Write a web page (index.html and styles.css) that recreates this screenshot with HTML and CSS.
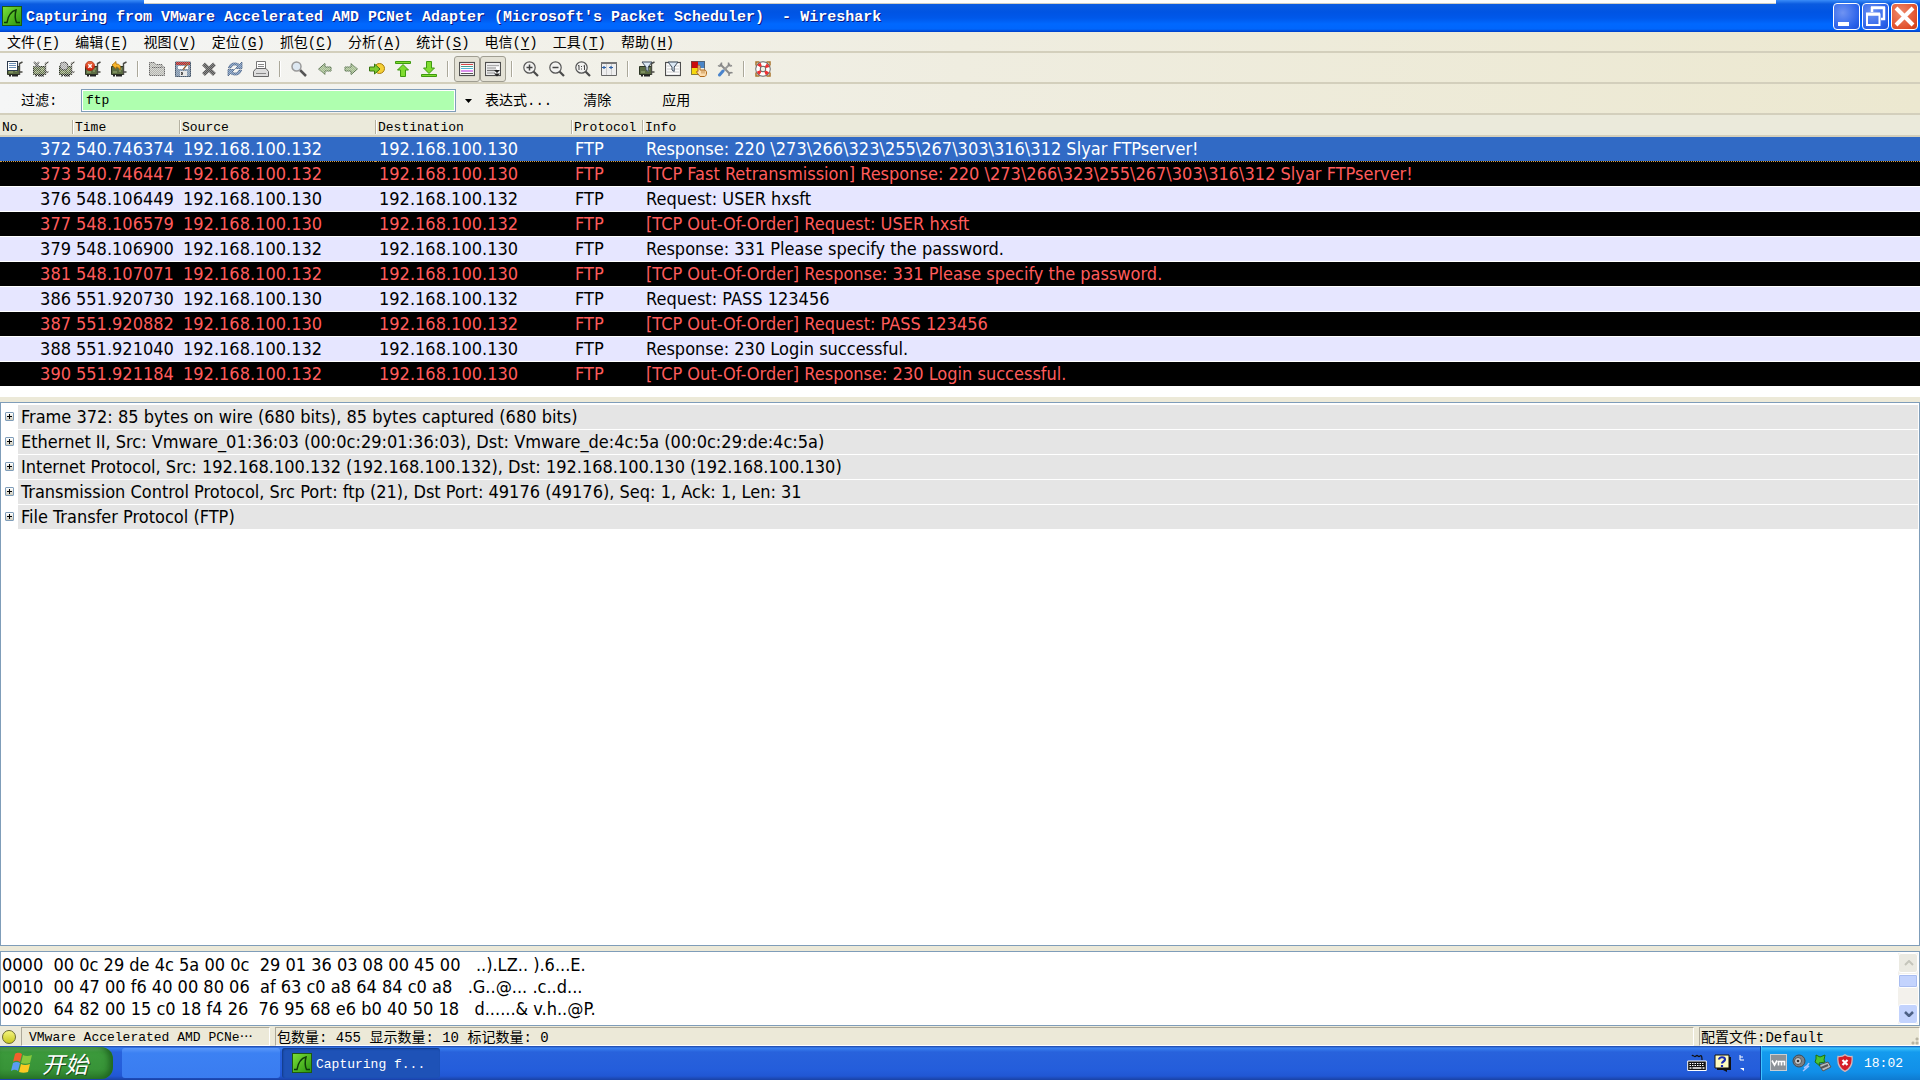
FILE: index.html
```html
<html lang="zh-CN">
<head>
  <meta charset="UTF-8" />
  <meta name="viewport" content="width=device-width, initial-scale=1.0"/>
  <title>Wireshark</title>
  <link rel="stylesheet" href="styles.css">
</head>
<body>

  <svg class="sprite" aria-hidden="true">
    <linearGradient id="gGreen" x1="0" y1="0" x2="1" y2="1"><stop offset="0" stop-color="#7be03a"/><stop offset="1" stop-color="#2a9410"/></linearGradient>
    <linearGradient id="gRed" x1="0" y1="0" x2="0" y2="1"><stop offset="0" stop-color="#f07040"/><stop offset="1" stop-color="#c81808"/></linearGradient>
    <symbol id="fin" viewBox="0 0 20 20">
      <rect x="0.5" y="0.5" width="19" height="19" fill="url(#gGreen)" stroke="#1d5a10"/>
      <path d="M2 16.500h3c1-6 3-11 9-12.500-1 4-1 9 .5 12.500H18" fill="none" stroke="#0d3a08" stroke-width="1.500"/>
    </symbol>
    <symbol id="nic" viewBox="0 0 16 16">
      <path d="M.5 5.500h12v8H.5z" fill="#5c6d43" stroke="#2c3524"/>
      <path d="M12.500 14V2.500L15.500 1M13 11h2.500" fill="none" stroke="#4a4a44" stroke-width="1.400"/>
      <path d="M2 14.500h2m1 0h6" stroke="#222" stroke-width="2"/>
      <path d="M2 11h4M8 8h3M8 10h2" stroke="#9fb37a"/>
    </symbol>
    <symbol id="zoomglass" viewBox="0 0 16 16">
      <path d="M10.500 10.500l4.500 4.500" stroke="#4a4a4a" stroke-width="2.200"/>
      <circle cx="6.500" cy="6.500" r="5.700" fill="#f2f2f0" stroke="#565656" stroke-width="1.200"/>
    </symbol>
    <symbol id="funnel" viewBox="0 0 16 16">
      <path d="M3 1h10L9.200 6v4.500L7 9V6z" fill="#dbe8f4" stroke="#3d4a5a"/>
    </symbol>
    <symbol id="arrow" viewBox="0 0 16 16">
      <path d="M1.500 8L8 2.500v3.500h6v4H8v3.500z" fill="#a3bd8e" stroke="#55704a"/>
    </symbol>
    <symbol id="lines" viewBox="0 0 16 16">
      <rect x="0.500" y="1.500" width="15" height="13" fill="#fff" stroke="#4e4e4e" stroke-width="1.200"/>
    </symbol>
    <pattern id="dither" width="2" height="2" patternUnits="userSpaceOnUse"><path d="M0 0h1v1H0zM1 1h1v1H1z" fill="#f3f2ee"/></pattern>
  </svg>

  <header class="titlebar">
    <svg class="icon-20"><use href="#fin"/></svg>
    <h1>Capturing from VMware Accelerated AMD PCNet Adapter (Microsoft's Packet Scheduler)&nbsp; - Wireshark</h1>
    <div class="window-buttons">
      <button aria-label="最小化"><svg viewBox="0 0 25 25"><path d="M4 18h11v4H4z" fill="#fff"/></svg></button>
      <button aria-label="还原"><svg viewBox="0 0 25 25"><path d="M9 8V4h12v11h-3M8 3.500h14" fill="none" stroke="#fff" stroke-width="2.500"/><path d="M4 10.500h12.500V21H4z" fill="none" stroke="#fff" stroke-width="2"/><path d="M3 10h14" stroke="#fff" stroke-width="3"/></svg></button>
      <button class="close" aria-label="关闭"><svg viewBox="0 0 25 25"><path d="M4 4l17 17M21 4L4 21" stroke="#fff" stroke-width="4"/></svg></button>
    </div>
  </header>

  <nav class="bar menu">
    <button>文件(<u>F</u>)</button>
    <button>编辑(<u>E</u>)</button>
    <button>视图(<u>V</u>)</button>
    <button>定位(<u>G</u>)</button>
    <button>抓包(<u>C</u>)</button>
    <button>分析(<u>A</u>)</button>
    <button>统计(<u>S</u>)</button>
    <button>电信(<u>Y</u>)</button>
    <button>工具(<u>T</u>)</button>
    <button>帮助(<u>H</u>)</button>
  </nav>

  <div class="bar toolbar">
    <button aria-label="网络接口"><svg viewBox="0 0 16 16"><use href="#nic"/><rect x="0.500" y="0.500" width="10" height="9" fill="#fff" stroke="#2d3b4d"/><path d="M2 2.500h7M2 4.500h7M2 6.500h7" stroke="#6b8fb5"/></svg></button>
    <button aria-label="抓包选项"><svg viewBox="0 0 16 16"><use href="#nic"/><path d="M1 1l5 5M6 1L2 6" stroke="#666" stroke-width="2"/><rect width="16" height="16" fill="url(#dither)" opacity=".6"/></svg></button>
    <button aria-label="开始抓包"><svg viewBox="0 0 16 16"><use href="#nic"/><circle cx="5" cy="5" r="4" fill="#aaa" stroke="#444"/><rect width="16" height="16" fill="url(#dither)" opacity=".6"/></svg></button>
    <button aria-label="停止抓包"><svg viewBox="0 0 16 16"><use href="#nic"/><circle cx="5" cy="5" r="4.700" fill="url(#gRed)" stroke="#a02008" stroke-width=".6"/><path d="M3.300 3.300l3.400 3.400M6.700 3.300L3.300 6.700" stroke="#fff" stroke-width="1.500"/></svg></button>
    <button aria-label="重新抓包"><svg viewBox="0 0 16 16"><use href="#nic"/><path d="M1 4l4-3.500V3c4 0 5 2 4 6-1-2-2-3-4-3v2z" fill="#f7b52c" stroke="#a86c08" stroke-width=".8"/></svg></button>
    <i></i>
    <button aria-label="打开"><svg viewBox="0 0 16 16"><path d="M.5 14.500V1.500h5l1.500 2h6V6h2.500v8.500z" fill="#b4b5b0" stroke="#666"/><path d="M3 6.500h10" stroke="#666"/><rect width="16" height="16" fill="url(#dither)" opacity=".6"/></svg></button>
    <button aria-label="保存"><svg viewBox="0 0 16 16"><path d="M.5 1h15v14.500H.5z" fill="#7f95ad" stroke="#45566b"/><path d="M1 1h14v3H1z" fill="#b03030"/><path d="M3 5h10v3H3z" fill="#fff"/><path d="M5 10h7v5H5z" fill="#e6e6e6"/><path d="M6 11h2v3H6z" fill="#444"/><path d="M13 2L8 9" stroke="#8b5a2b" stroke-width="1.500"/><rect width="16" height="16" fill="url(#dither)" opacity=".3"/></svg></button>
    <button aria-label="关闭文件"><svg viewBox="0 0 16 16"><path d="M2.500 3l11 10.500M13.500 3L2.500 13.500" stroke="#555" stroke-width="4"/><rect width="16" height="16" fill="url(#dither)" opacity=".35"/></svg></button>
    <button aria-label="重新加载"><svg viewBox="0 0 16 16"><path d="M1.500 7c1-6 8-6 11-3.500L15 1v6.500H8.500L11 5C8 3 5 4 4 7zM14.500 9c-1 6-8 6-11 3.500L1 15V8.500h6.500L5 11c3 2 6 1 7-2z" fill="#6d8cb5" stroke="#34507a" stroke-width=".7"/><rect width="16" height="16" fill="url(#dither)" opacity=".4"/></svg></button>
    <button aria-label="打印"><svg viewBox="0 0 16 16"><path d="M3.500 8V.5h9V8" fill="#fff" stroke="#777"/><path d="M.5 15.500v-5L3 7.500h10l2.500 3v5z" fill="#ddd" stroke="#666"/><path d="M5 3.500h6M5 5.500h6M3 12.500h10" stroke="#888"/></svg></button>
    <i></i>
    <button aria-label="查找"><svg viewBox="0 0 16 16"><path d="M9 9l6 6" stroke="#555" stroke-width="2.500"/><circle cx="5.500" cy="5.500" r="4.500" fill="#dde8f2" stroke="#999" stroke-width="1.500"/></svg></button>
    <button aria-label="后退"><svg viewBox="0 0 16 16"><use href="#arrow"/><rect width="16" height="16" fill="url(#dither)" opacity=".4"/></svg></button>
    <button aria-label="前进"><svg viewBox="0 0 16 16"><g transform="matrix(-1 0 0 1 16 0)"><use href="#arrow"/></g><rect width="16" height="16" fill="url(#dither)" opacity=".4"/></svg></button>
    <button aria-label="转到"><svg viewBox="0 0 16 16"><circle cx="10.500" cy="7.500" r="5" fill="#f4cf35" stroke="#a87d10"/><path d="M.5 6h5V3L11 8l-5.500 5v-3h-5z" fill="#7dcc30" stroke="#38760f"/></svg></button>
    <button aria-label="第一个"><svg viewBox="0 0 16 16"><path d="M.5.500h15v2H.5zM8 3.500l5.500 5.500H10.500v6.500h-5V9h-3z" fill="#7fdc30" stroke="#3f9a10"/></svg></button>
    <button aria-label="最后一个"><svg viewBox="0 0 16 16"><path d="M.5 13.500h15v2H.5zM8 12.500L2.500 7h3V.5h5V7h3z" fill="#7fdc30" stroke="#3f9a10"/></svg></button>
    <i></i>
    <button class="on" aria-label="着色"><svg viewBox="0 0 16 16"><use href="#lines"/><path d="M2 3.500h12" stroke="#d84848"/><path d="M2 5.500h12" stroke="#489a8a"/><path d="M2 7.500h12" stroke="#50b8d8"/><path d="M2 10h12" stroke="#dc90ec" stroke-width="2"/><path d="M2 12.500h12" stroke="#555"/></svg></button>
    <button class="on" aria-label="自动滚动"><svg viewBox="0 0 16 16"><use href="#lines"/><path d="M2 4.500h12M2 7h9M2 12h8" stroke="#aaa" stroke-width="1.500"/><path d="M2 9.500h10" stroke="#777" stroke-width="1.500"/><path d="M9 9h6l-3 3zM9 12.500h6l-3 3z" fill="#222"/></svg></button>
    <i></i>
    <button aria-label="放大"><svg viewBox="0 0 16 16"><use href="#zoomglass"/><path d="M3.500 6.500h6M6.500 3.500v6" stroke="#444" stroke-width="1.500"/></svg></button>
    <button aria-label="缩小"><svg viewBox="0 0 16 16"><use href="#zoomglass"/><path d="M3.500 6.500h6" stroke="#444" stroke-width="1.500"/></svg></button>
    <button aria-label="正常大小"><svg viewBox="0 0 16 16"><use href="#zoomglass"/><path d="M3 5l1-.7v4.700M8.500 5l1-.7v4.700M6.500 5v1M6.500 7.500v1" fill="none" stroke="#444"/></svg></button>
    <button aria-label="调整列宽"><svg viewBox="0 0 16 16"><path d="M.5 1.500h15v13H.5z" fill="#eee" stroke="#666"/><path d="M0 2h16" stroke="#777" stroke-width="2"/><path d="M5.500 3v11M10.500 3v11" stroke="#ccc"/><path d="M1 6.500h4M3 5v3M8 6.500h4M10 5v3" stroke="#2e62a8" stroke-width="1.200"/></svg></button>
    <i></i>
    <button aria-label="抓包过滤"><svg viewBox="0 0 16 16"><use href="#nic"/><use href="#funnel"/></svg></button>
    <button aria-label="显示过滤"><svg viewBox="0 0 16 16"><use href="#lines"/><path d="M2 5h12M2 8h12M2 11h12" stroke="#ccc"/><use href="#funnel"/></svg></button>
    <button aria-label="着色规则"><svg viewBox="0 0 16 16"><path d="M0 0h7v7H0z" fill="#c90c0c"/><path d="M7 0h7v7H7z" fill="#4a86c8"/><path d="M0 7h7v7H0z" fill="#f6d80c"/><path d="M.5.500h13v13H.5z" fill="none" stroke="#555" stroke-width=".7"/><path d="M7 4.500c1-.8 2 0 2 1V9h4c2 0 2.500 1 2.500 3 0 2-1 3.500-2 3.500H9L5.500 11c0-1 1-1 1.500-.5z" fill="#fbdcae" stroke="#b06a1c"/><path d="M11 9.500v3M13 9.500v3" stroke="#b06a1c" stroke-width=".7"/></svg></button>
    <button aria-label="首选项"><svg viewBox="0 0 16 16"><path d="M3 3l10 10" stroke="#8a8a8a" stroke-width="2"/><path d="M13 3L7 9" stroke="#999" stroke-width="2"/><path d="M1 4.500c2 1.500 4 0 3.500-3M15 4.500c-2 1-4 0-3.500-3M15.500 12c-2-1-4 0-3.500 3" fill="none" stroke="#888" stroke-width="1.500"/><path d="M6 10l-3.500 4" stroke="#4a84cc" stroke-width="3" stroke-linecap="round"/></svg></button>
    <i></i>
    <button aria-label="帮助"><svg viewBox="0 0 16 16"><path d="M1 4.500V1h3.500M11.500 1H15v3.500M1 11.500V15h3.500M11.500 15H15v-3.500" fill="none" stroke="#a8742c" stroke-width="1.500"/><circle cx="8" cy="8" r="5" fill="none" stroke="#666" stroke-width="5.500"/><circle cx="8" cy="8" r="5" fill="none" stroke="#fff" stroke-width="3.600"/><circle cx="8" cy="8" r="5" fill="none" stroke="#ee3030" stroke-width="3.600" stroke-dasharray="3 4.854" stroke-dashoffset="-2.430"/></svg></button>
  </div>

  <div class="bar filter">
    <label for="filter">过滤:</label>
    <input id="filter" type="text" value="ftp">
    <button class="drop" aria-label="历史"><svg viewBox="0 0 7 4"><path d="M0 0h7L3.500 4z"/></svg></button>
    <button>表达式...</button>
    <button>清除</button>
    <button>应用</button>
  </div>

  <main>
    <section class="packets">
      <table>
        <colgroup><col class="c-no"><col class="c-time"><col class="c-addr"><col class="c-addr"><col class="c-proto"><col></colgroup>
        <thead>
          <tr><th>No.</th><th>Time</th><th>Source</th><th>Destination</th><th>Protocol</th><th>Info</th></tr>
        </thead>
        <tbody>
          <tr class="selected"><td>372</td><td>540.746374</td><td>192.168.100.132</td><td>192.168.100.130</td><td>FTP</td><td>Response: 220 \273\266\323\255\267\303\316\312 Slyar FTPserver!</td></tr>
          <tr class="bad"><td>373</td><td>540.746447</td><td>192.168.100.132</td><td>192.168.100.130</td><td>FTP</td><td>[TCP Fast Retransmission] Response: 220 \273\266\323\255\267\303\316\312 Slyar FTPserver!</td></tr>
          <tr><td>376</td><td>548.106449</td><td>192.168.100.130</td><td>192.168.100.132</td><td>FTP</td><td>Request: USER hxsft</td></tr>
          <tr class="bad"><td>377</td><td>548.106579</td><td>192.168.100.130</td><td>192.168.100.132</td><td>FTP</td><td>[TCP Out-Of-Order] Request: USER hxsft</td></tr>
          <tr><td>379</td><td>548.106900</td><td>192.168.100.132</td><td>192.168.100.130</td><td>FTP</td><td>Response: 331 Please specify the password.</td></tr>
          <tr class="bad"><td>381</td><td>548.107071</td><td>192.168.100.132</td><td>192.168.100.130</td><td>FTP</td><td>[TCP Out-Of-Order] Response: 331 Please specify the password.</td></tr>
          <tr><td>386</td><td>551.920730</td><td>192.168.100.130</td><td>192.168.100.132</td><td>FTP</td><td>Request: PASS 123456</td></tr>
          <tr class="bad"><td>387</td><td>551.920882</td><td>192.168.100.130</td><td>192.168.100.132</td><td>FTP</td><td>[TCP Out-Of-Order] Request: PASS 123456</td></tr>
          <tr><td>388</td><td>551.921040</td><td>192.168.100.132</td><td>192.168.100.130</td><td>FTP</td><td>Response: 230 Login successful.</td></tr>
          <tr class="bad"><td>390</td><td>551.921184</td><td>192.168.100.132</td><td>192.168.100.130</td><td>FTP</td><td>[TCP Out-Of-Order] Response: 230 Login successful.</td></tr>
        </tbody>
      </table>
    </section>

    <ul class="pane details">
      <li><button aria-label="展开"></button><span>Frame 372: 85 bytes on wire (680 bits), 85 bytes captured (680 bits)</span></li>
      <li><button aria-label="展开"></button><span>Ethernet II, Src: Vmware_01:36:03 (00:0c:29:01:36:03), Dst: Vmware_de:4c:5a (00:0c:29:de:4c:5a)</span></li>
      <li><button aria-label="展开"></button><span>Internet Protocol, Src: 192.168.100.132 (192.168.100.132), Dst: 192.168.100.130 (192.168.100.130)</span></li>
      <li><button aria-label="展开"></button><span>Transmission Control Protocol, Src Port: ftp (21), Dst Port: 49176 (49176), Seq: 1, Ack: 1, Len: 31</span></li>
      <li><button aria-label="展开"></button><span>File Transfer Protocol (FTP)</span></li>
    </ul>

    <div class="pane bytes">
<pre>0000  00 0c 29 de 4c 5a 00 0c  29 01 36 03 08 00 45 00   ..).LZ.. ).6...E.
0010  00 47 00 f6 40 00 80 06  af 63 c0 a8 64 84 c0 a8   .G..@... .c..d...
0020  64 82 00 15 c0 18 f4 26  76 95 68 e6 b0 40 50 18   d......&amp; v.h..@P.</pre>
      <div class="scrollbar">
        <button class="up" aria-label="向上"><svg viewBox="0 0 10 6"><path d="M1 5l4-4 4 4" fill="none" stroke="#c5c5bb" stroke-width="2"/></svg></button>
        <div class="thumb"></div>
        <button class="down" aria-label="向下"><svg viewBox="0 0 10 6"><path d="M1 1l4 4 4-4" fill="none" stroke="#4d6185" stroke-width="2.500"/></svg></button>
      </div>
    </div>
  </main>

  <footer class="status">
    <span class="led"></span>
    <span class="cell source">VMware Accelerated AMD PCNe⋯</span>
    <span class="cell counts">包数量: 455 显示数量: 10 标记数量: 0</span>
    <span class="cell profile">配置文件:Default</span>
  </footer>

  <div class="taskbar">
    <button class="start">
      <svg viewBox="0 0 24 24"><path d="M5 3c3-2 5-1 7 0l-2 8c-2-1-4-2-7 0z" fill="#f0602c"/><path d="M13 4c2 1 5 1.500 9 0l-2 8c-3 1-6 1-9 0z" fill="#86c83c"/><path d="M3 12c3-1.500 5-1 7 0l-2 8c-2-1.500-4-2-7 0z" fill="#5a9cf4"/><path d="M11 13c2 1 5 1.500 9 0l-2 8c-3 1-6 1-9 0z" fill="#fbc922"/></svg>
      开始
    </button>
    <button class="task" aria-label="窗口"></button>
    <button class="task active"><svg class="icon-20"><use href="#fin"/></svg><span>Capturing f...</span></button>
    <div class="langbar">
      <svg class="keyboard" viewBox="0 0 20 18"><path d="M5 2c1-2 2 2 4 0s2 2 4 0 2 3 2 4" fill="none" stroke="#111" stroke-width="1.200"/><path d="M.7 7h18.600v9.500H.7z" fill="#111" stroke="#fff"/><path d="M2.500 9.500h15M2.500 11.500h15" stroke="#fff" stroke-dasharray="1.500 1"/><path d="M2.500 14h15" stroke="#fff" stroke-width="1.500" stroke-dasharray="2 1 9 1"/></svg>
      <svg class="ask" viewBox="0 0 18 18"><path d="M3 3h14v13h-4v2l-4-2H3z" fill="#111"/><path d="M1 1h14v13H1z" fill="#fdfbc0" stroke="#111"/><path d="M5 5.500c0-3 6-3 6 0 0 2-3 2-3 4M8 11v2" fill="none" stroke="#1a2cb0" stroke-width="2.200"/></svg>
      <svg class="handle" viewBox="0 0 6 18"><path d="M1 1v5M1 3h3M1 6h4" fill="none" stroke="#fff"/><path d="M1 14h4v3z" fill="#fff"/></svg>
    </div>
    <div class="tray">
      <svg viewBox="0 0 18 18"><rect x="0.500" y="0.500" width="16" height="16" fill="#8c9298" stroke="#c9ced2"/><path d="M2 6.500L4.500 11 7 6.500M8.500 11.500V7.500h6v4M11.500 7.500v4" fill="none" stroke="#fff" stroke-width="1.600"/></svg>
      <svg viewBox="0 0 18 18"><circle cx="7" cy="7" r="6" fill="#7d8186" stroke="#43484e"/><circle cx="6" cy="7" r="3.500" fill="#c9cdd0" stroke="#555"/><circle cx="6" cy="7" r="1.300" fill="#333"/><path d="M12 14c2-1 4-2 5-5M11 17l6-5" fill="none" stroke="#a8c4ff" stroke-width="1.400"/></svg>
      <svg viewBox="0 0 18 18"><path d="M5 11l9-3 3 5-8 4z" fill="#b7bcc0" stroke="#555"/><path d="M7 14l7-3" stroke="#555" stroke-width="2"/><path d="M2 1l4 2 5-2-1 5 1 2-6 1 1 3-5-4 1-3z" fill="#4cc332" stroke="#1d7010"/></svg>
      <svg viewBox="0 0 18 18"><path d="M9 .7c2 1.800 4 2 7 1.800.8 6.500-1 12-7 14.800C3 14.500 1.200 9 2 2.500 5 2.700 7 2.500 9 .7z" fill="#d51c26" stroke="#d4b4b8" stroke-width="1.300"/><path d="M6.500 6l5 5M11.500 6l-5 5" stroke="#fff" stroke-width="2.200"/></svg>
      <time>18:02</time>
    </div>
  </div>

</body>
</html>
```
FILE: styles.css
```css
* { box-sizing: border-box; }

body {
  margin: 0;
  height: 100vh;
  display: flex;
  flex-direction: column;
  overflow: hidden;
  background: #ece9d8;
  color: #000;
  font: 14px/16px "Liberation Mono", "Noto Sans CJK SC", monospace;
}

button {
  margin: 0;
  padding: 0;
  border: none;
  background: none;
  color: inherit;
  font: inherit;
}

svg { display: block; }

.sprite {
  position: absolute;
  width: 0;
  height: 0;
}

.icon-20 {
  width: 20px;
  height: 20px;
  flex: none;
}

/* title bar */
.titlebar {
  position: relative;
  display: flex;
  align-items: center;
  height: 32px;
  padding: 0 2px;
  gap: 4px;
  background: linear-gradient(#3a8cf8 0, #0a5be0 4px, #0054e3 12px, #0058ea 18px, #0068ff 24px, #0066fc 29px, #0040c8 32px);
  color: #fff;
}

.titlebar::before {
  content: "";
  position: absolute;
  top: 0;
  left: 144px;
  right: 144px;
  height: 3px;
  background: #fdfdfd;
  border-bottom: 1px solid #cfcdc4;
}

.titlebar h1 {
  flex: 1;
  margin: 0;
  padding-top: 4px;
  font-size: 15px;
  font-weight: bold;
  white-space: nowrap;
  text-shadow: 1px 1px #0a1883;
}

.window-buttons {
  display: flex;
  gap: 2px;
}

.window-buttons button {
  width: 27px;
  height: 27px;
  border: 1px solid #fff;
  border-radius: 4px;
  background: radial-gradient(circle at 35% 35%, #6f93f2, #2a62ea 70%, #1c4fd8);
}

.window-buttons .close {
  background: radial-gradient(circle at 35% 35%, #ee8a6c, #e1502a 70%, #c93c14);
}

/* menu, toolbar, filter */
.bar {
  display: flex;
  align-items: center;
  padding-top: 2px;
  background: linear-gradient(90deg, #f5f6f6, #efede0 50%, #ece8d0);
  border-bottom: 2px solid #d3cfbc;
}

.menu {
  height: 21px;
  padding-left: 7px;
  gap: 15px;
}

.menu u { text-underline-offset: 2px; }

.toolbar {
  height: 31px;
  padding-left: 2px;
}

.toolbar button {
  width: 26px;
  height: 26px;
  padding: 5px;
}

.toolbar button.on {
  border: 1px solid #a09e92;
  border-radius: 3px;
  padding: 4px;
  background: #e4e2d6;
}

.toolbar i {
  width: 2px;
  height: 16px;
  margin: 0 5px;
  border-left: 1px solid #aba89a;
  border-right: 1px solid #fff;
}

.filter {
  height: 31px;
  padding-top: 4px;
  padding-left: 21px;
}

.filter label { width: 60px; }

.filter input {
  width: 375px;
  height: 23px;
  border: 1px solid #7f9db9;
  padding: 0 4px;
  background: #afffaf;
  box-shadow: inset 0 0 0 1px #fff;
  color: #000;
  font: inherit;
  font-size: 13px;
  outline: none;
}

.filter .drop {
  width: 24px;
  margin-right: 5px;
  padding-left: 9px;
}

.filter .drop svg {
  width: 7px;
  height: 4px;
}

.filter button + button { margin-right: 31px; }
.filter button:last-child { margin-left: 20px; }

/* the three stacked panes */
main {
  flex: 1;
  min-height: 0;
  display: flex;
  flex-direction: column;
  gap: 5px;
}

.packets {
  padding-bottom: 10px;
  background: #fff;
}

table {
  width: 100%;
  table-layout: fixed;
  border-collapse: collapse;
}

.c-no { width: 72px; }
.c-time { width: 107px; }
.c-addr { width: 196px; }
.c-proto { width: 71px; }

th {
  height: 21px;
  padding: 4px 2px 0;
  background: linear-gradient(90deg, #b5b2a2 1px, #fff 1px, #fff 2px, #ebeadb 2px) no-repeat 0 5px / 100% 14px #ebeadb;
  border-bottom: 2px solid #d3cfbc;
  font-size: 13px;
  line-height: 15px;
  font-weight: normal;
  text-align: left;
}

th:first-child { background: #ebeadb; }
th:not(:first-child) { padding-left: 3px; }

td {
  height: 25px;
  padding: 0 4px;
  border-bottom: 1px solid #fff;
  background: #e6e6ff;
  font: 18px/24px "DejaVu Sans Condensed", "Noto Sans", sans-serif;
  white-space: nowrap;
}

td:first-child {
  padding: 0 1px;
  text-align: right;
}

.bad td {
  background: #000;
  color: #ff5c5c;
}

.selected td {
  background: #316ac5;
  border-top: 1px dotted #d09a40;
  border-bottom: 1px dotted #d09a40;
  line-height: 23px;
  color: #fff;
}

.pane {
  margin: 0;
  background: #fff;
  border: 1px solid #7f9db9;
}

.details {
  flex: 1;
  min-height: 0;
  padding: 2px 1px 1px;
  list-style: none;
  font: 18px/24px "DejaVu Sans Condensed", "Noto Sans", sans-serif;
}

.details li {
  display: flex;
  align-items: center;
  gap: 4px;
  margin-bottom: 1px;
  padding-left: 3px;
}

.details li button {
  width: 9px;
  height: 9px;
  border: 1px solid #7f9db9;
  border-radius: 1px;
  background:
    linear-gradient(#000, #000) center / 5px 1px no-repeat,
    linear-gradient(#000, #000) center / 1px 5px no-repeat,
    linear-gradient(#fff, #d0ccbc);
}

.details span {
  flex: 1;
  padding-left: 3px;
  background: #e5e5e5;
}

.bytes {
  display: flex;
  justify-content: space-between;
  height: 75px;
  overflow: hidden;
}

.bytes pre {
  margin: 0;
  padding: 2px 1px 0;
  font: 18px/22px "DejaVu Sans Condensed", "Noto Sans", sans-serif;
}

.scrollbar {
  display: flex;
  flex-direction: column;
  width: 20px;
  height: 71px;
  margin: 1px;
  background: #f3f1ec;
}

.scrollbar button {
  height: 20px;
  padding: 0 5px;
  border: 1px solid #fff;
  border-radius: 3px;
}

.scrollbar svg { width: 10px; height: 6px; margin: auto; }
.scrollbar .up { background: #ebeae2; }
.scrollbar .down { margin-top: auto; background: #c3d3fd; }

.thumb {
  height: 14px;
  margin-top: 1px;
  border: 1px solid #fff;
  border-radius: 2px;
  background: #c3d3fd;
  box-shadow: inset 0 0 0 1px #a9bdf0;
}

/* status bar */
.status {
  display: flex;
  align-items: center;
  height: 20px;
  padding: 1px 0 0 2px;
  gap: 5px;
}

.led {
  width: 14px;
  height: 14px;
  border: 1px solid #6a6a30;
  border-radius: 50%;
  background: linear-gradient(#f4f47c, #c8c820);
}

.cell {
  height: 19px;
  padding: 2px 1px 0;
  border: 1px solid;
  border-color: #aca899 #fff #fff #aca899;
  white-space: nowrap;
}

.source {
  width: 249px;
  padding-left: 7px;
  font-size: 13px;
}

.counts { flex: 1; }

.profile {
  width: 221px;
  background:
    radial-gradient(circle, #b8b4a2 1px, transparent 2px) right bottom / 4px 4px no-repeat,
    radial-gradient(circle, #b8b4a2 1px, transparent 2px) right 4px bottom 0 / 4px 4px no-repeat,
    radial-gradient(circle, #b8b4a2 1px, transparent 2px) right 0 bottom 4px / 4px 4px no-repeat;
}

/* task bar */
.taskbar {
  display: flex;
  align-items: center;
  height: 34px;
  background: linear-gradient(#1941a5 0, #3a80f0 2px, #2862dc 6px, #245ddb 24px, #2157d4 30px, #1941a5);
  color: #fff;
  font-size: 13px;
}

.start {
  display: flex;
  align-items: center;
  gap: 8px;
  width: 113px;
  height: 32px;
  margin-right: 9px;
  padding-left: 10px;
  border-radius: 0 12px 12px 0;
  background: linear-gradient(#62b062 0, #3c9a3c 5px, #389438 22px, #2c7c2c);
  box-shadow: inset -4px 0 6px #1f6420;
  font: italic 23px/28px "Noto Sans CJK SC", sans-serif;
  text-shadow: 1px 1px #1c4f1c;
}

.start svg {
  width: 24px;
  height: 24px;
}

.task {
  display: flex;
  align-items: center;
  gap: 4px;
  width: 158px;
  height: 30px;
  margin-right: 2px;
  padding-left: 10px;
  border-radius: 3px;
  background: linear-gradient(#5a98fa, #3c81f3 5px, #3a7cf0);
}

.task.active {
  background: #1e52b7;
  box-shadow: inset 1px 1px 2px #123a86;
}

.task span { padding-top: 3px; }

.langbar {
  display: flex;
  align-items: center;
  gap: 7px;
  margin-left: auto;
  margin-right: 15px;
}

.keyboard { width: 20px; height: 18px; }
.ask { width: 18px; height: 18px; }
.handle { width: 6px; height: 18px; }

.tray {
  display: flex;
  align-items: center;
  gap: 4px;
  width: 160px;
  height: 34px;
  padding-left: 9px;
  border-left: 1px solid #0b3f9c;
  background: linear-gradient(#0c59b9 0, #3ac0fb 2px, #149bee 6px, #118fe8 26px, #0e7ad0);
  box-shadow: inset 1px 0 #3fc4ff;
}

.tray svg {
  width: 18px;
  height: 18px;
}

.tray time {
  margin-left: 6px;
  padding-top: 2px;
}
```
